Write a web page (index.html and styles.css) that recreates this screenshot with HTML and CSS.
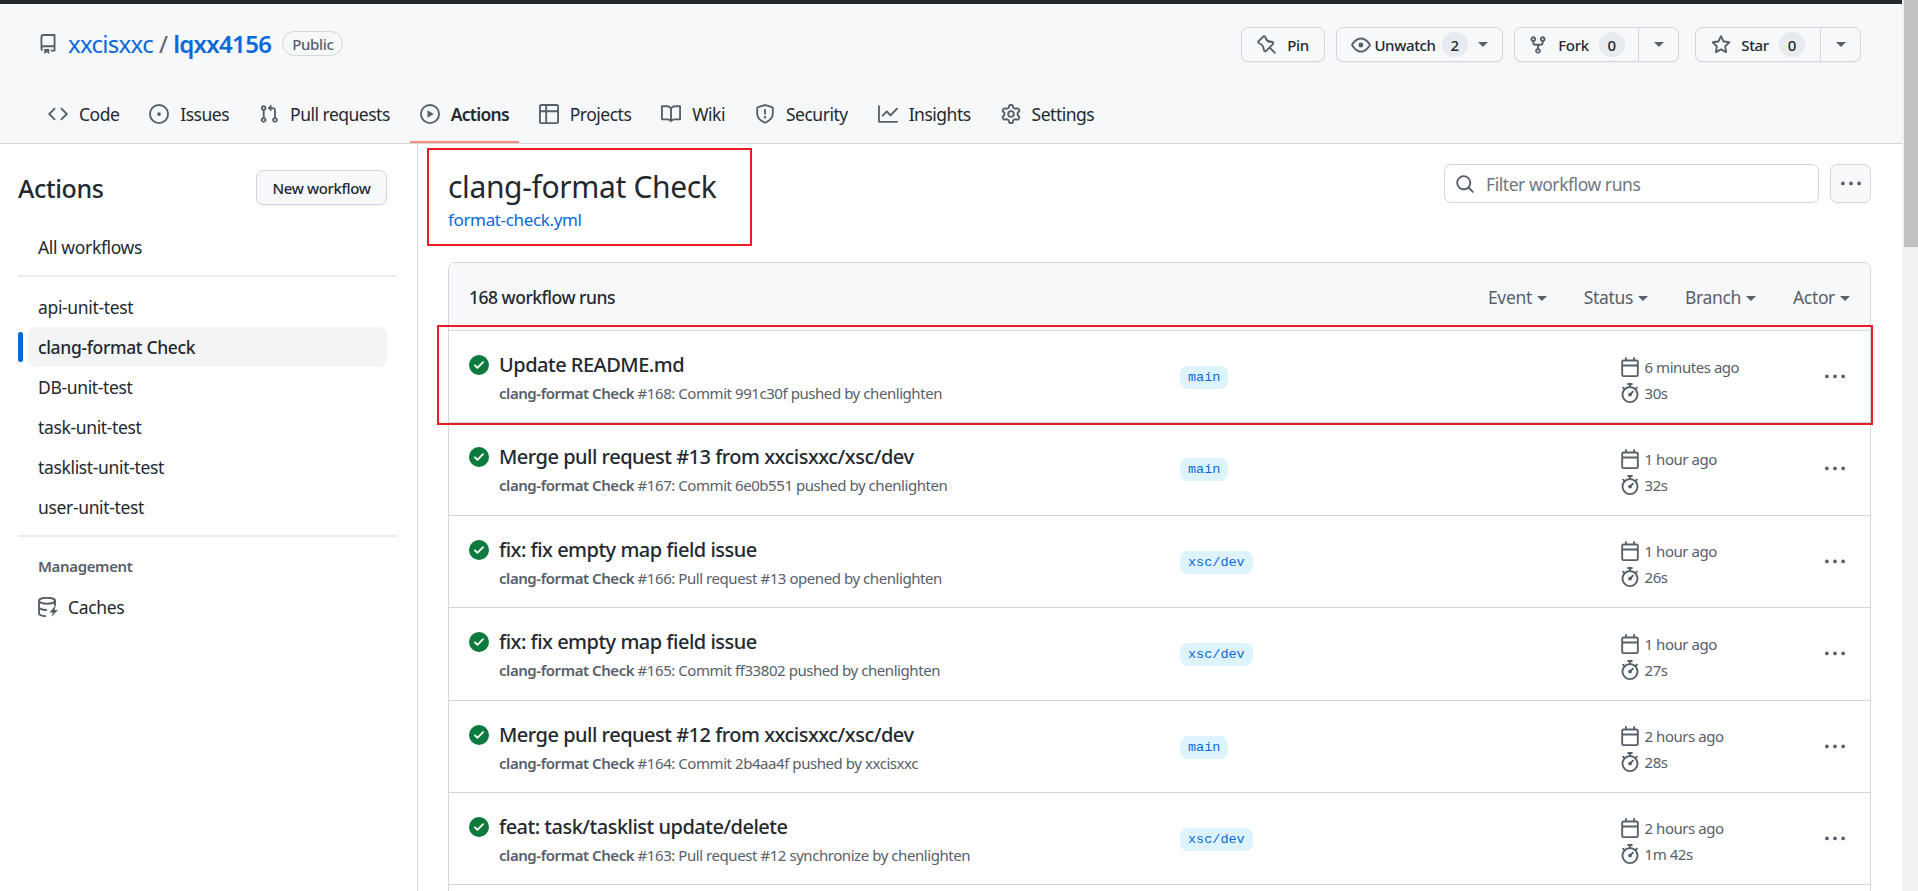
FILE: index.html
```html
<!DOCTYPE html>
<html lang="en">
<head>
<meta charset="UTF-8">
<title>Workflow runs · xxcisxxc/lqxx4156</title>
<link rel="stylesheet" href="styles.css">
</head>
<body>
<svg class="sprite" xmlns="http://www.w3.org/2000/svg">
  <symbol id="i-repo" viewBox="0 0 16 16"><path d="M2 2.5A2.5 2.5 0 0 1 4.5 0h8.75a.75.75 0 0 1 .75.75v12.5a.75.75 0 0 1-.75.75h-2.5a.75.75 0 0 1 0-1.5h1.75v-2h-8a1 1 0 0 0-.714 1.7.75.75 0 1 1-1.072 1.05A2.495 2.495 0 0 1 2 11.5Zm10.5-1h-8a1 1 0 0 0-1 1v6.708A2.486 2.486 0 0 1 4.5 9h8ZM5 12.25a.25.25 0 0 1 .25-.25h3.5a.25.25 0 0 1 .25.25v3.25a.25.25 0 0 1-.4.2l-1.45-1.087a.249.249 0 0 0-.3 0L5.4 15.7a.25.25 0 0 1-.4-.2Z"/></symbol>
  <symbol id="i-code" viewBox="0 0 16 16"><path d="m11.28 3.22 4.25 4.25a.75.75 0 0 1 0 1.06l-4.25 4.25a.749.749 0 0 1-1.275-.326.749.749 0 0 1 .215-.734L13.94 8l-3.72-3.72a.749.749 0 0 1 .326-1.275.749.749 0 0 1 .734.215Zm-6.56 0a.751.751 0 0 1 1.042.018.751.751 0 0 1 .018 1.042L2.06 8l3.72 3.72a.749.749 0 0 1-.326 1.275.749.749 0 0 1-.734-.215L.47 8.53a.75.75 0 0 1 0-1.06Z"/></symbol>
  <symbol id="i-issue" viewBox="0 0 16 16"><path d="M8 9.5a1.5 1.5 0 1 0 0-3 1.5 1.5 0 0 0 0 3Z"/><path d="M8 0a8 8 0 1 1 0 16A8 8 0 0 1 8 0ZM1.5 8a6.5 6.5 0 1 0 13 0 6.5 6.5 0 0 0-13 0Z"/></symbol>
  <symbol id="i-pr" viewBox="0 0 16 16"><path d="M1.5 3.25a2.25 2.25 0 1 1 3 2.122v5.256a2.251 2.251 0 1 1-1.5 0V5.372A2.25 2.25 0 0 1 1.5 3.25Zm5.677-.177L9.573.677A.25.25 0 0 1 10 .854V2.5h1A2.5 2.5 0 0 1 13.5 5v5.628a2.251 2.251 0 1 1-1.5 0V5a1 1 0 0 0-1-1h-1v1.646a.25.25 0 0 1-.427.177L7.177 3.427a.25.25 0 0 1 0-.354ZM3.75 2.5a.75.75 0 1 0 0 1.5.75.75 0 0 0 0-1.5Zm0 9.5a.75.75 0 1 0 0 1.5.75.75 0 0 0 0-1.5Zm8.25.75a.75.75 0 1 0 1.5 0 .75.75 0 0 0-1.5 0Z"/></symbol>
  <symbol id="i-play" viewBox="0 0 16 16"><path d="M8 0a8 8 0 1 1 0 16A8 8 0 0 1 8 0ZM1.5 8a6.5 6.5 0 1 0 13 0 6.5 6.5 0 0 0-13 0Zm4.879-2.773 4.264 2.559a.25.25 0 0 1 0 .428l-4.264 2.559A.25.25 0 0 1 6 10.559V5.442a.25.25 0 0 1 .379-.215Z"/></symbol>
  <symbol id="i-table" viewBox="0 0 16 16"><path d="M0 1.75C0 .784.784 0 1.75 0h12.5C15.216 0 16 .784 16 1.75v12.5A1.75 1.75 0 0 1 14.25 16H1.75A1.75 1.75 0 0 1 0 14.25ZM6.5 6.5v8h7.75a.25.25 0 0 0 .25-.25V6.5Zm8-1.5V1.75a.25.25 0 0 0-.25-.25H6.5V5Zm-13 1.5v7.75c0 .138.112.25.25.25H5v-8ZM5 5V1.5H1.75a.25.25 0 0 0-.25.25V5Z"/></symbol>
  <symbol id="i-book" viewBox="0 0 16 16"><path d="M0 1.75A.75.75 0 0 1 .75 1h4.253c1.227 0 2.317.59 3 1.501A3.743 3.743 0 0 1 11.006 1h4.245a.75.75 0 0 1 .75.75v10.5a.75.75 0 0 1-.75.75h-4.507a2.25 2.25 0 0 0-1.591.659l-.622.621a.75.75 0 0 1-1.06 0l-.622-.621A2.25 2.25 0 0 0 5.258 13H.75a.75.75 0 0 1-.75-.75Zm7.251 10.324.004-5.073-.002-2.253A2.25 2.25 0 0 0 5.003 2.5H1.5v9h3.757a3.75 3.75 0 0 1 1.994.574ZM8.755 4.75l-.004 7.322a3.752 3.752 0 0 1 1.992-.572H14.5v-9h-3.495a2.25 2.25 0 0 0-2.25 2.25Z"/></symbol>
  <symbol id="i-shield" viewBox="0 0 16 16"><path d="M7.467.133a1.748 1.748 0 0 1 1.066 0l5.25 1.68A1.75 1.75 0 0 1 15 3.48V7c0 1.566-.32 3.182-1.303 4.682-.983 1.498-2.585 2.813-5.032 3.855a1.697 1.697 0 0 1-1.33 0c-2.447-1.042-4.049-2.357-5.032-3.855C1.32 10.182 1 8.566 1 7V3.48a1.75 1.75 0 0 1 1.217-1.667Zm.61 1.429a.25.25 0 0 0-.153 0l-5.25 1.68a.25.25 0 0 0-.174.238V7c0 1.358.275 2.666 1.057 3.86.784 1.194 2.121 2.34 4.366 3.297a.196.196 0 0 0 .154 0c2.245-.956 3.582-2.104 4.366-3.298C13.225 9.666 13.5 8.36 13.5 7V3.48a.251.251 0 0 0-.174-.237l-5.25-1.68ZM8.75 4.75v3a.75.75 0 0 1-1.5 0v-3a.75.75 0 0 1 1.5 0ZM9 10.5a1 1 0 1 1-2 0 1 1 0 0 1 2 0Z"/></symbol>
  <symbol id="i-graph" viewBox="0 0 16 16"><path d="M1.5 1.75V13.5h13.75a.75.75 0 0 1 0 1.5H.75a.75.75 0 0 1-.75-.75V1.75a.75.75 0 0 1 1.5 0Zm14.28 2.53-5.25 5.25a.75.75 0 0 1-1.06 0L7 7.06 4.28 9.78a.751.751 0 0 1-1.042-.018.751.751 0 0 1-.018-1.042l3.25-3.25a.75.75 0 0 1 1.06 0L10 7.94l4.72-4.72a.751.751 0 0 1 1.042.018.751.751 0 0 1 .018 1.042Z"/></symbol>
  <symbol id="i-gear" viewBox="0 0 16 16"><path d="M8 0a8.2 8.2 0 0 1 .701.031C9.444.095 9.99.645 10.16 1.29l.288 1.107c.018.066.079.158.212.224.231.114.454.243.668.386.123.082.233.09.299.071l1.103-.303c.644-.176 1.392.021 1.82.63.27.385.506.792.704 1.218.315.675.111 1.422-.364 1.891l-.814.806c-.049.048-.098.147-.088.294.016.257.016.515 0 .772-.01.147.038.246.088.294l.814.806c.475.469.679 1.216.364 1.891a7.977 7.977 0 0 1-.704 1.217c-.428.61-1.176.807-1.82.63l-1.102-.302c-.067-.019-.177-.011-.3.071a5.909 5.909 0 0 1-.668.386c-.133.066-.194.158-.211.224l-.29 1.106c-.168.646-.715 1.196-1.458 1.26a8.006 8.006 0 0 1-1.402 0c-.743-.064-1.289-.614-1.458-1.26l-.289-1.106c-.018-.066-.079-.158-.212-.224a5.738 5.738 0 0 1-.668-.386c-.123-.082-.233-.09-.299-.071l-1.103.303c-.644.176-1.392-.021-1.82-.63a8.12 8.12 0 0 1-.704-1.218c-.315-.675-.111-1.422.363-1.891l.815-.806c.05-.048.098-.147.088-.294a6.214 6.214 0 0 1 0-.772c.01-.147-.038-.246-.088-.294l-.815-.806C.635 6.045.431 5.298.746 4.623a7.92 7.92 0 0 1 .704-1.217c.428-.61 1.176-.807 1.82-.63l1.102.302c.067.019.177.011.3-.071.214-.143.437-.272.668-.386.133-.066.194-.158.211-.224l.29-1.106C6.009.645 6.556.095 7.299.03 7.53.01 7.764 0 8 0Zm-.571 1.525c-.036.003-.108.036-.137.146l-.289 1.105c-.147.561-.549.967-.998 1.189-.173.086-.34.183-.5.29-.417.278-.97.423-1.529.27l-1.103-.303c-.109-.03-.175.016-.195.045-.22.312-.412.644-.573.99-.014.031-.021.11.059.19l.815.806c.411.406.562.957.53 1.456a4.709 4.709 0 0 0 0 .582c.032.499-.119 1.05-.53 1.456l-.815.806c-.081.08-.073.159-.059.19.162.346.353.677.573.989.02.03.085.076.195.046l1.102-.303c.56-.153 1.113-.008 1.53.27.161.107.328.204.501.29.447.222.85.629.997 1.189l.289 1.105c.029.109.101.143.137.146a6.6 6.6 0 0 0 1.142 0c.036-.003.108-.036.137-.146l.289-1.105c.147-.561.549-.967.998-1.189.173-.086.34-.183.5-.29.417-.278.97-.423 1.529-.27l1.103.303c.109.029.175-.016.195-.045.22-.313.411-.644.573-.99.014-.031.021-.11-.059-.19l-.815-.806c-.411-.406-.562-.957-.53-1.456a4.709 4.709 0 0 0 0-.582c-.032-.499.119-1.05.53-1.456l.815-.806c.081-.08.073-.159.059-.19a6.464 6.464 0 0 0-.573-.989c-.02-.03-.085-.076-.195-.046l-1.102.303c-.56.153-1.113.008-1.53-.27a4.44 4.44 0 0 0-.501-.29c-.447-.222-.85-.629-.997-1.189l-.289-1.105c-.029-.11-.101-.143-.137-.146a6.6 6.6 0 0 0-1.142 0ZM11 8a3 3 0 1 1-6 0 3 3 0 0 1 6 0ZM9.5 8a1.5 1.5 0 1 0-3.001.001A1.5 1.5 0 0 0 9.5 8Z"/></symbol>
  <symbol id="i-pin" viewBox="0 0 16 16"><path d="M4.456.734a1.75 1.75 0 0 1 2.826.504l.613 1.327a3.081 3.081 0 0 0 2.084 1.707l2.454.584c1.332.317 1.8 1.972.832 2.94L11.06 10l3.72 3.72a.75.75 0 1 1-1.061 1.06L10 11.06l-2.204 2.205c-.968.968-2.623.5-2.94-.832l-.584-2.454a3.081 3.081 0 0 0-1.707-2.084l-1.327-.613a1.75 1.75 0 0 1-.504-2.826L4.456.734zM5.92 1.866a.25.25 0 0 0-.404-.072L1.794 5.516a.25.25 0 0 0 .072.404l1.328.613A4.582 4.582 0 0 1 5.73 9.63l.584 2.454a.25.25 0 0 0 .42.12l5.47-5.47a.25.25 0 0 0-.12-.42L9.63 6.13a4.581 4.581 0 0 1-3.098-2.537L5.92 1.866z"/></symbol>
  <symbol id="i-eye" viewBox="0 0 16 16"><path d="M8 2c1.981 0 3.671.992 4.933 2.078 1.27 1.091 2.187 2.345 2.637 3.023a1.62 1.62 0 0 1 0 1.798c-.45.678-1.367 1.932-2.637 3.023C11.67 13.008 9.981 14 8 14c-1.981 0-3.671-.992-4.933-2.078C1.797 10.83.88 9.576.43 8.898a1.62 1.62 0 0 1 0-1.798c.45-.677 1.367-1.931 2.637-3.022C4.33 2.992 6.019 2 8 2ZM1.679 7.932a.12.12 0 0 0 0 .136c.411.622 1.241 1.75 2.366 2.717C5.176 11.758 6.527 12.5 8 12.5c1.473 0 2.825-.742 3.955-1.715 1.124-.967 1.954-2.096 2.366-2.717a.12.12 0 0 0 0-.136c-.412-.621-1.242-1.75-2.366-2.717C10.824 4.242 9.473 3.5 8 3.5c-1.473 0-2.825.742-3.955 1.715-1.124.967-1.954 2.096-2.366 2.717ZM8 10a2 2 0 1 1-.001-3.999A2 2 0 0 1 8 10Z"/></symbol>
  <symbol id="i-fork" viewBox="0 0 16 16"><path d="M5 5.372v.878c0 .414.336.75.75.75h4.5a.75.75 0 0 0 .75-.75v-.878a2.25 2.25 0 1 1 1.5 0v.878a2.25 2.25 0 0 1-2.25 2.25h-1.5v2.128a2.251 2.251 0 1 1-1.5 0V8.5h-1.5A2.25 2.25 0 0 1 3.5 6.25v-.878a2.25 2.25 0 1 1 1.5 0ZM5 3.25a.75.75 0 1 0-1.5 0 .75.75 0 0 0 1.5 0Zm6.75.75a.75.75 0 1 0 0-1.5.75.75 0 0 0 0 1.5Zm-3 8.75a.75.75 0 1 0-1.5 0 .75.75 0 0 0 1.5 0Z"/></symbol>
  <symbol id="i-star" viewBox="0 0 16 16"><path d="M8 .25a.75.75 0 0 1 .673.418l1.882 3.815 4.21.612a.75.75 0 0 1 .416 1.279l-3.046 2.97.719 4.192a.751.751 0 0 1-1.088.791L8 12.347l-3.766 1.98a.75.75 0 0 1-1.088-.79l.72-4.194L.818 6.374a.75.75 0 0 1 .416-1.28l4.21-.611L7.327.668A.75.75 0 0 1 8 .25Zm0 2.445L6.615 5.5a.75.75 0 0 1-.564.41l-3.097.45 2.24 2.184a.75.75 0 0 1 .216.664l-.528 3.084 2.769-1.456a.75.75 0 0 1 .698 0l2.77 1.456-.53-3.084a.75.75 0 0 1 .216-.664l2.24-2.183-3.096-.45a.75.75 0 0 1-.564-.41L8 2.694Z"/></symbol>
  <symbol id="i-search" viewBox="0 0 16 16"><path d="M10.68 11.74a6 6 0 0 1-7.922-8.982 6 6 0 0 1 8.982 7.922l3.04 3.04a.749.749 0 0 1-.326 1.275.749.749 0 0 1-.734-.215ZM11.5 7a4.499 4.499 0 1 0-8.997 0A4.499 4.499 0 0 0 11.5 7Z"/></symbol>
  <symbol id="i-kebab" viewBox="0 0 16 16"><path d="M8 9a1.5 1.5 0 1 0 0-3 1.5 1.5 0 0 0 0 3ZM1.5 9a1.5 1.5 0 1 0 0-3 1.5 1.5 0 0 0 0 3Zm13 0a1.5 1.5 0 1 0 0-3 1.5 1.5 0 0 0 0 3Z"/></symbol>
  <symbol id="i-check" viewBox="0 0 16 16"><path d="M8 16A8 8 0 1 1 8 0a8 8 0 0 1 0 16Zm3.78-9.72a.751.751 0 0 0-.018-1.042.751.751 0 0 0-1.042-.018L6.75 9.19 5.28 7.72a.751.751 0 0 0-1.042.018.751.751 0 0 0-.018 1.042l2 2a.75.75 0 0 0 1.06 0Z"/></symbol>
  <symbol id="i-calendar" viewBox="0 0 16 16"><path d="M4.75 0a.75.75 0 0 1 .75.75V2h5V.75a.75.75 0 0 1 1.5 0V2h1.25c.966 0 1.75.784 1.75 1.75v10.5A1.75 1.75 0 0 1 13.25 16H2.75A1.75 1.75 0 0 1 1 14.25V3.75C1 2.784 1.784 2 2.75 2H4V.75A.75.75 0 0 1 4.75 0ZM2.5 7.5v6.75c0 .138.112.25.25.25h10.5a.25.25 0 0 0 .25-.25V7.5Zm10.75-4H2.75a.25.25 0 0 0-.25.25V6h11V3.75a.25.25 0 0 0-.25-.25Z"/></symbol>
  <symbol id="i-stopwatch" viewBox="0 0 16 16"><path d="M5.75.75A.75.75 0 0 1 6.5 0h3a.75.75 0 0 1 0 1.5h-.75v1l-.001.041a6.724 6.724 0 0 1 3.464 1.435l.007-.006.75-.75a.749.749 0 0 1 1.275.326.749.749 0 0 1-.215.734l-.75.75-.006.007a6.75 6.75 0 1 1-10.548 0L2.72 5.03l-.75-.75a.751.751 0 0 1 .018-1.042.751.751 0 0 1 1.042-.018l.75.75.007.006A6.72 6.72 0 0 1 7.25 2.541V1.5H6.5a.75.75 0 0 1-.75-.75ZM8 14.5a5.25 5.25 0 1 0-.001-10.501A5.25 5.25 0 0 0 8 14.5Zm.389-6.7 1.33-1.33a.75.75 0 1 1 1.061 1.06L9.45 8.861A1.503 1.503 0 0 1 8 10.75a1.499 1.499 0 1 1 .389-2.95Z"/></symbol>
  <symbol id="i-cache" viewBox="0 0 16 16"><g fill="none" stroke="currentColor" stroke-width="1.5" stroke-linecap="round" stroke-linejoin="round"><ellipse cx="7.2" cy="3" rx="6.4" ry="2.4"/><path d="M.8 3v10c0 1.2 2.2 2.1 5 2.3M13.6 3v3.6M.8 8c0 1.3 2.6 2.4 5.8 2.4"/></g><path d="M13.4 7.4 9.2 12.3h2.7l-1 3.4 5-5.3h-2.7l.9-3Z"/></symbol>
</svg>

<div class="page">
  <div class="main-col">
    <div class="topbar"></div>

    <header class="repo-head">
      <div class="repo-row">
        <div class="repo-title">
          <svg class="icon"><use href="#i-repo"/></svg>
          <a class="owner">xxcisxxc</a>
          <span class="slash">/</span>
          <a class="repo-name">lqxx4156</a>
          <span class="badge">Public</span>
        </div>
        <div class="repo-actions">
          <div class="btn btn-pin"><svg class="icon"><use href="#i-pin"/></svg><span>Pin</span></div>
          <div class="btn btn-watch"><svg class="icon"><use href="#i-eye"/></svg><span>Unwatch</span><span class="counter">2</span><i class="caret"></i></div>
          <div class="btn-group btn-fork">
            <div class="btn"><svg class="icon"><use href="#i-fork"/></svg><span>Fork</span><span class="counter">0</span></div>
            <div class="btn btn-drop"><i class="caret"></i></div>
          </div>
          <div class="btn-group btn-star">
            <div class="btn"><svg class="icon"><use href="#i-star"/></svg><span>Star</span><span class="counter">0</span></div>
            <div class="btn btn-drop"><i class="caret"></i></div>
          </div>
        </div>
      </div>
      <nav class="tabs">
        <a class="tab"><svg class="icon"><use href="#i-code"/></svg>Code</a>
        <a class="tab"><svg class="icon"><use href="#i-issue"/></svg>Issues</a>
        <a class="tab"><svg class="icon"><use href="#i-pr"/></svg>Pull requests</a>
        <a class="tab active"><svg class="icon"><use href="#i-play"/></svg>Actions</a>
        <a class="tab"><svg class="icon"><use href="#i-table"/></svg>Projects</a>
        <a class="tab"><svg class="icon"><use href="#i-book"/></svg>Wiki</a>
        <a class="tab"><svg class="icon"><use href="#i-shield"/></svg>Security</a>
        <a class="tab"><svg class="icon"><use href="#i-graph"/></svg>Insights</a>
        <a class="tab"><svg class="icon"><use href="#i-gear"/></svg>Settings</a>
      </nav>
    </header>

    <div class="content">
      <aside class="sidebar">
        <div class="side-head">
          <h2>Actions</h2>
          <div class="btn btn-new">New workflow</div>
        </div>
        <a class="side-item">All workflows</a>
        <div class="side-rule"></div>
        <a class="side-item">api-unit-test</a>
        <a class="side-item current">clang-format Check</a>
        <a class="side-item">DB-unit-test</a>
        <a class="side-item">task-unit-test</a>
        <a class="side-item">tasklist-unit-test</a>
        <a class="side-item">user-unit-test</a>
        <div class="side-rule"></div>
        <div class="side-label">Management</div>
        <a class="side-item cache-item"><svg class="icon"><use href="#i-cache"/></svg>Caches</a>
      </aside>

      <main class="runs-area">
        <div class="runs-top">
          <div class="wf-title">
            <h1>clang-format Check</h1>
            <a class="wf-file">format-check.yml</a>
          </div>
          <div class="runs-tools">
            <div class="filter-box"><svg class="icon"><use href="#i-search"/></svg><span>Filter workflow runs</span></div>
            <div class="btn btn-more"><svg class="icon"><use href="#i-kebab"/></svg></div>
          </div>
        </div>

        <section class="runs-box">
          <div class="runs-head">
            <strong>168 workflow runs</strong>
            <div class="filters">
              <span class="filter">Event<i class="caret"></i></span>
              <span class="filter">Status<i class="caret"></i></span>
              <span class="filter">Branch<i class="caret"></i></span>
              <span class="filter">Actor<i class="caret"></i></span>
            </div>
          </div>

          <div class="run">
            <svg class="icon run-ok"><use href="#i-check"/></svg>
            <div class="run-text">
              <div class="run-title">Update README.md</div>
              <div class="run-sub"><b>clang-format Check</b> #168: Commit 991c30f pushed by chenlighten</div>
            </div>
            <div class="run-branch"><span class="branch">main</span></div>
            <div class="run-meta">
              <div class="meta-line"><svg class="icon"><use href="#i-calendar"/></svg>6 minutes ago</div>
              <div class="meta-line"><svg class="icon"><use href="#i-stopwatch"/></svg>30s</div>
            </div>
            <svg class="icon run-more"><use href="#i-kebab"/></svg>
          </div>

          <div class="run">
            <svg class="icon run-ok"><use href="#i-check"/></svg>
            <div class="run-text">
              <div class="run-title">Merge pull request #13 from xxcisxxc/xsc/dev</div>
              <div class="run-sub"><b>clang-format Check</b> #167: Commit 6e0b551 pushed by chenlighten</div>
            </div>
            <div class="run-branch"><span class="branch">main</span></div>
            <div class="run-meta">
              <div class="meta-line"><svg class="icon"><use href="#i-calendar"/></svg>1 hour ago</div>
              <div class="meta-line"><svg class="icon"><use href="#i-stopwatch"/></svg>32s</div>
            </div>
            <svg class="icon run-more"><use href="#i-kebab"/></svg>
          </div>

          <div class="run">
            <svg class="icon run-ok"><use href="#i-check"/></svg>
            <div class="run-text">
              <div class="run-title">fix: fix empty map field issue</div>
              <div class="run-sub"><b>clang-format Check</b> #166: Pull request #13 opened by chenlighten</div>
            </div>
            <div class="run-branch"><span class="branch">xsc/dev</span></div>
            <div class="run-meta">
              <div class="meta-line"><svg class="icon"><use href="#i-calendar"/></svg>1 hour ago</div>
              <div class="meta-line"><svg class="icon"><use href="#i-stopwatch"/></svg>26s</div>
            </div>
            <svg class="icon run-more"><use href="#i-kebab"/></svg>
          </div>

          <div class="run">
            <svg class="icon run-ok"><use href="#i-check"/></svg>
            <div class="run-text">
              <div class="run-title">fix: fix empty map field issue</div>
              <div class="run-sub"><b>clang-format Check</b> #165: Commit ff33802 pushed by chenlighten</div>
            </div>
            <div class="run-branch"><span class="branch">xsc/dev</span></div>
            <div class="run-meta">
              <div class="meta-line"><svg class="icon"><use href="#i-calendar"/></svg>1 hour ago</div>
              <div class="meta-line"><svg class="icon"><use href="#i-stopwatch"/></svg>27s</div>
            </div>
            <svg class="icon run-more"><use href="#i-kebab"/></svg>
          </div>

          <div class="run">
            <svg class="icon run-ok"><use href="#i-check"/></svg>
            <div class="run-text">
              <div class="run-title">Merge pull request #12 from xxcisxxc/xsc/dev</div>
              <div class="run-sub"><b>clang-format Check</b> #164: Commit 2b4aa4f pushed by xxcisxxc</div>
            </div>
            <div class="run-branch"><span class="branch">main</span></div>
            <div class="run-meta">
              <div class="meta-line"><svg class="icon"><use href="#i-calendar"/></svg>2 hours ago</div>
              <div class="meta-line"><svg class="icon"><use href="#i-stopwatch"/></svg>28s</div>
            </div>
            <svg class="icon run-more"><use href="#i-kebab"/></svg>
          </div>

          <div class="run">
            <svg class="icon run-ok"><use href="#i-check"/></svg>
            <div class="run-text">
              <div class="run-title">feat: task/tasklist update/delete</div>
              <div class="run-sub"><b>clang-format Check</b> #163: Pull request #12 synchronize by chenlighten</div>
            </div>
            <div class="run-branch"><span class="branch">xsc/dev</span></div>
            <div class="run-meta">
              <div class="meta-line"><svg class="icon"><use href="#i-calendar"/></svg>2 hours ago</div>
              <div class="meta-line"><svg class="icon"><use href="#i-stopwatch"/></svg>1m 42s</div>
            </div>
            <svg class="icon run-more"><use href="#i-kebab"/></svg>
          </div>
        </section>
      </main>
    </div>
  </div>

  <div class="scrollbar"><div class="thumb"></div></div>

  <!-- red annotation boxes drawn over the screenshot -->
  <div class="mark mark-title"></div>
  <div class="mark mark-run"></div>
</div>
</body>
</html>
```

FILE: styles.css
```css
/* GitHub Actions page, everything is 125% of the normal size */

* {
    box-sizing: border-box;
}

html, body {
    height: 100%;
    margin: 0;
    overflow: hidden;
}

body {
    font-family: "Noto Sans", "Liberation Sans", sans-serif;
    font-size: 17.5px;
    letter-spacing: -0.35px;
    color: #24292f;
    background-color: #fff;
}

.sprite {
    display: none;
}

.icon {
    width: 20px;
    height: 20px;
    flex: none;
    fill: #57606a;
    color: #57606a;
}

.page {
    position: relative;
    display: flex;
    height: 891px;
    overflow: hidden;
}

.main-col {
    width: 1902px;
    flex: none;
}

.topbar {
    height: 4px;
    background-color: #24292f;
}

/* repo header */
.repo-head {
    height: 140px;
    background-color: #f6f8fa;
    border-bottom: 1px solid #d0d7de;
}

.repo-row {
    display: flex;
    justify-content: space-between;
    height: 90px;
    padding: 23px 41px 0 38px;
}

.repo-title {
    display: flex;
    align-items: center;
    height: 33px;
    font-size: 24px;
    letter-spacing: -0.7px;
    color: #57606a;
}

.repo-title .icon {
    margin-right: 10px;
}

.owner {
    color: #0969da;
}

.slash {
    margin: 0 6px;
}

.repo-name {
    color: #0969da;
    font-weight: 600;
}

.badge {
    display: flex;
    align-items: center;
    height: 25px;
    margin-left: 11px;
    padding: 0 9px;
    font-size: 15px;
    font-weight: 500;
    letter-spacing: -0.35px;
    color: #57606a;
    border: 1px solid #d0d7de;
    border-radius: 13px;
}

.repo-actions {
    display: flex;
    gap: 11px;
}

.btn {
    display: flex;
    align-items: center;
    justify-content: center;
    height: 35px;
    font-size: 15px;
    font-weight: 500;
    color: #24292f;
    background-color: #f6f8fa;
    border: 1px solid #d0d7de;
    border-radius: 7px;
    box-shadow: 0 1px 0 rgba(31, 35, 40, 0.04);
}

.btn-pin {
    width: 84px;
    gap: 10px;
}

.btn-watch {
    width: 167px;
    gap: 3px;
}

.btn-group {
    display: flex;
}

.btn-group .btn:first-child {
    gap: 10px;
    flex: 1;
    border-radius: 7px 0 0 7px;
}

.btn-drop {
    width: 41px;
    margin-left: -1px;
    border-radius: 0 7px 7px 0;
}

.btn-fork {
    width: 165px;
}

.btn-star {
    width: 166px;
    margin-left: 5px;
}

.counter {
    display: flex;
    align-items: center;
    justify-content: center;
    width: 26px;
    height: 25px;
    font-size: 15px;
    background-color: rgba(175, 184, 193, 0.2);
    border-radius: 13px;
}

.btn-watch .counter {
    margin: 0 7px 0 3px;
}

.caret {
    display: inline-block;
    width: 0;
    height: 0;
    border-style: solid;
    border-width: 5px 5px 0;
    border-color: #57606a transparent transparent;
}

/* tabs */
.tabs {
    display: flex;
    gap: 10px;
    height: 49px;
    padding-left: 38px;
    letter-spacing: -0.5px;
}

.tab {
    position: relative;
    display: flex;
    align-items: center;
    gap: 11px;
    height: 40px;
    padding: 0 10px;
}

.tab.active {
    font-weight: 600;
    letter-spacing: -0.75px;
}

.tab.active::after {
    content: "";
    position: absolute;
    left: 0;
    right: 0;
    bottom: -9px;
    height: 2px;
    background-color: #fd8c73;
}

/* sidebar + runs */
.content {
    display: flex;
    height: 747px;
}

.sidebar {
    width: 418px;
    flex: none;
    padding: 26px 20px 0 18px;
    border-right: 1px solid #d0d7de;
}

.side-head {
    display: flex;
    align-items: center;
    justify-content: space-between;
    height: 35px;
    margin-right: 10px;
    margin-bottom: 22px;
}

.side-head h2 {
    margin: 0;
    font-size: 25px;
    font-weight: 500;
}

.btn-new {
    width: 131px;
}

.side-item {
    position: relative;
    display: flex;
    align-items: center;
    height: 40px;
    margin: 0 10px 0 10px;
    padding-left: 10px;
    border-radius: 7px;
}

.side-item.current {
    background-color: #f3f4f6;
    font-weight: 500;
}

.side-item.current::before {
    content: "";
    position: absolute;
    left: -10px;
    top: 5px;
    width: 5px;
    height: 30px;
    background-color: #0969da;
    border-radius: 3px;
}

.cache-item {
    gap: 10px;
}

.side-rule {
    height: 2px;
    margin: 8px 0 10px;
    background-color: #e8ebef;
}

.side-label {
    margin: 19px 0 11px 20px;
    font-size: 15px;
    font-weight: 600;
    line-height: 20px;
    color: #57606a;
}

.runs-area {
    flex: 1;
    padding: 17px 31px 0 30px;
}

.runs-top {
    display: flex;
    justify-content: space-between;
    height: 101px;
}

.wf-title {
    padding-top: 2px;
}

.wf-title h1 {
    margin: 0;
    font-size: 30px;
    font-weight: 400;
    line-height: 48px;
}

.wf-file {
    display: block;
    color: #0969da;
    font-size: 17px;
    line-height: 18px;
}

.runs-tools {
    display: flex;
    gap: 11px;
    margin-top: 3px;
}

.filter-box {
    display: flex;
    align-items: center;
    gap: 11px;
    width: 375px;
    height: 39px;
    padding: 1px 0 0 10px;
    letter-spacing: -0.45px;
    color: #6e7781;
    border: 1px solid #d0d7de;
    border-radius: 7px;
}

.btn-more {
    width: 41px;
    height: 39px;
}

.runs-box {
    min-height: 700px;
    border: 1px solid #d0d7de;
    border-radius: 7px 7px 0 0;
}

.runs-head {
    display: flex;
    align-items: center;
    justify-content: space-between;
    height: 68px;
    padding: 0 20px;
    background-color: #f6f8fa;
    border-radius: 7px 7px 0 0;
    border-bottom: 1px solid #d0d7de;
}

.runs-head strong {
    font-weight: 500;
    letter-spacing: -0.5px;
}

.filters {
    display: flex;
    gap: 37px;
    color: #57606a;
}

.filter .caret {
    margin-left: 5px;
    vertical-align: 3px;
    border-width: 5px 5px 0;
}

.run {
    display: flex;
    height: 92.4px;
    padding-left: 20px;
    border-bottom: 1px solid #d0d7de;
}

.run-ok {
    margin-top: 24px;
    margin-right: 10px;
    fill: #0a7a3e;
    color: #0a7a3e;
}

.run-text {
    width: 681px;
    padding-top: 21px;
}

.run-title {
    font-size: 20px;
    font-weight: 500;
    letter-spacing: -0.5px;
    line-height: 26px;
}

.run-sub {
    margin-top: 5px;
    font-size: 15px;
    letter-spacing: -0.44px;
    line-height: 20px;
    color: #57606a;
}

.run-sub b {
    font-weight: 600;
}

.run-branch {
    display: flex;
    align-items: flex-start;
    width: 439.5px;
    padding-top: 35px;
}

.branch {
    height: 23px;
    padding: 0 8px;
    font-family: "Liberation Mono", monospace;
    font-size: 13.5px;
    letter-spacing: 0;
    line-height: 23px;
    color: #0969da;
    background-color: #ddf4ff;
    border-radius: 8px;
}

.run-meta {
    width: 205.5px;
    padding-top: 22.5px;
    font-size: 15px;
    letter-spacing: -0.45px;
    color: #57606a;
}

.meta-line {
    display: flex;
    align-items: center;
    gap: 5px;
    height: 26px;
    white-space: nowrap;
}

.run-more {
    margin-top: 36px;
}

/* fake scrollbar of the window */
.scrollbar {
    flex: 1;
    padding-left: 2px;
    background-color: #f1f1f1;
}

.thumb {
    height: 247px;
    background-color: #c1c1c1;
}

.mark {
    position: absolute;
    border: 2px solid #ed1c24;
}

.mark-title {
    left: 427px;
    top: 148px;
    width: 325px;
    height: 98px;
}

.mark-run {
    left: 437px;
    top: 325px;
    width: 1436px;
    height: 100px;
}
```
